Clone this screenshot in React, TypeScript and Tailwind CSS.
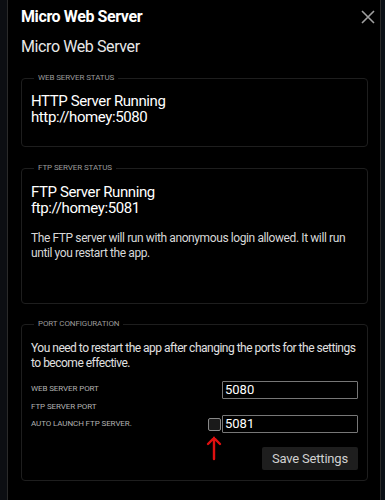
import { ReactNode } from "react";

function Section(props: { title: string; children: ReactNode; className?: string }) {
  return (
    <fieldset
      className={`border border-[#1e1e1e] rounded-[4px] pl-[9px] pr-[9px] ${props.className ?? ""}`}
    >
      <legend className="ml-[3px] px-[4px] text-[8px] leading-[10px] tracking-[-0.1px] text-[#9a9a9a] uppercase">
        {props.title}
      </legend>
      {props.children}
    </fieldset>
  );
}

export default function App() {
  return (
    <div
      className="w-[385px] h-[500px] flex bg-[#0b0d11] overflow-hidden tracking-[-0.4px]"
      style={{ fontFamily: "Roboto, 'Liberation Sans', sans-serif" }}
    >
      <div className="w-[7px] bg-[#0c0e12]" />
      <div className="w-[1px] bg-[#2a2a2a]" />
      <div className="w-[372px] bg-black flex flex-col pl-[13px] pr-[12px] pt-[5px]">
        <div className="flex items-center justify-between h-[24px]">
          <h1 className="text-[16px] font-bold text-white">Micro Web Server</h1>
          <svg
            width="16"
            height="16"
            viewBox="0 0 16 16"
            className="mr-[-8px]"
            stroke="#a0a0a0"
            strokeWidth="1.6"
          >
            <path d="M2 2 L14 14 M14 2 L2 14" />
          </svg>
        </div>
        <div className="mt-[8px] text-[16px] leading-[20px] text-[#e8e8e8]">
          Micro Web Server
        </div>

        <Section title="Web Server Status" className="mt-[16px] h-[74px]">
          <div className="mt-[10px] text-[15px] leading-[16px] text-white">
            HTTP Server Running
            <br />
            http://homey:5080
          </div>
        </Section>

        <Section title="FTP Server Status" className="mt-[16px] h-[141px]">
          <div className="mt-[11px] text-[15px] leading-[16px] text-white">
            FTP Server Running
            <br />
            ftp://homey:5081
          </div>
          <p className="mt-[15px] text-[12px] leading-[15px] text-[#d8d8d8]">
            The FTP server will run with anonymous login allowed. It will run until you restart the app.
          </p>
        </Section>

        <Section title="Port Configuration" className="mt-[15px] h-[162px]">
          <p className="mt-[12px] text-[12px] leading-[15px] tracking-[-0.5px] text-[#e0e0e0]">
            You need to restart the app after changing the ports for the settings to become effective.
          </p>
          <div className="mt-[10px] flex">
            <div className="flex-1 flex flex-col pt-[2px] text-[8px] leading-[12px] tracking-[-0.1px] text-[#b0b0b0]">
              <span>WEB SERVER PORT</span>
              <span className="mt-[6px]">FTP SERVER PORT</span>
              <span className="mt-[5px]">AUTO LAUNCH FTP SERVER.</span>
            </div>
            <div className="flex flex-col items-end">
              <div className="w-[136px] h-[18px] border border-[#777] rounded-[1px] px-[2px] text-[13px] leading-[16px] tracking-[0px] text-white">
                5080
              </div>
              <div className="mt-[16px] flex items-center gap-[1px]">
                <div className="w-[13px] h-[13px] border border-[#888] rounded-[2px] bg-[#1a1a1a]" />
                <div className="w-[136px] h-[18px] border border-[#777] rounded-[1px] px-[2px] text-[13px] leading-[16px] tracking-[0px] text-white">
                  5081
                </div>
              </div>
              <div className="flex w-[150px]">
                <svg width="16" height="26" viewBox="0 0 16 26" className="ml-[-2px] mt-[2px]">
                  <path d="M8 24 V3 M2 9 L8 3 L14 9" stroke="#e01010" strokeWidth="2.4" fill="none" strokeLinecap="round" />
                </svg>
              </div>
            </div>
          </div>
          <div className="flex justify-end mt-[-14px]">
            <button className="w-[96px] h-[23px] bg-[#1e1e1e] rounded-[2px] text-[13px] tracking-[-0.2px] text-[#d0d0d0]">
              Save Settings
            </button>
          </div>
        </Section>
      </div>
      <div className="w-[1px] bg-[#2a2a2a]" />
      <div className="flex-1 bg-[#0b1016]" />
    </div>
  );
}
